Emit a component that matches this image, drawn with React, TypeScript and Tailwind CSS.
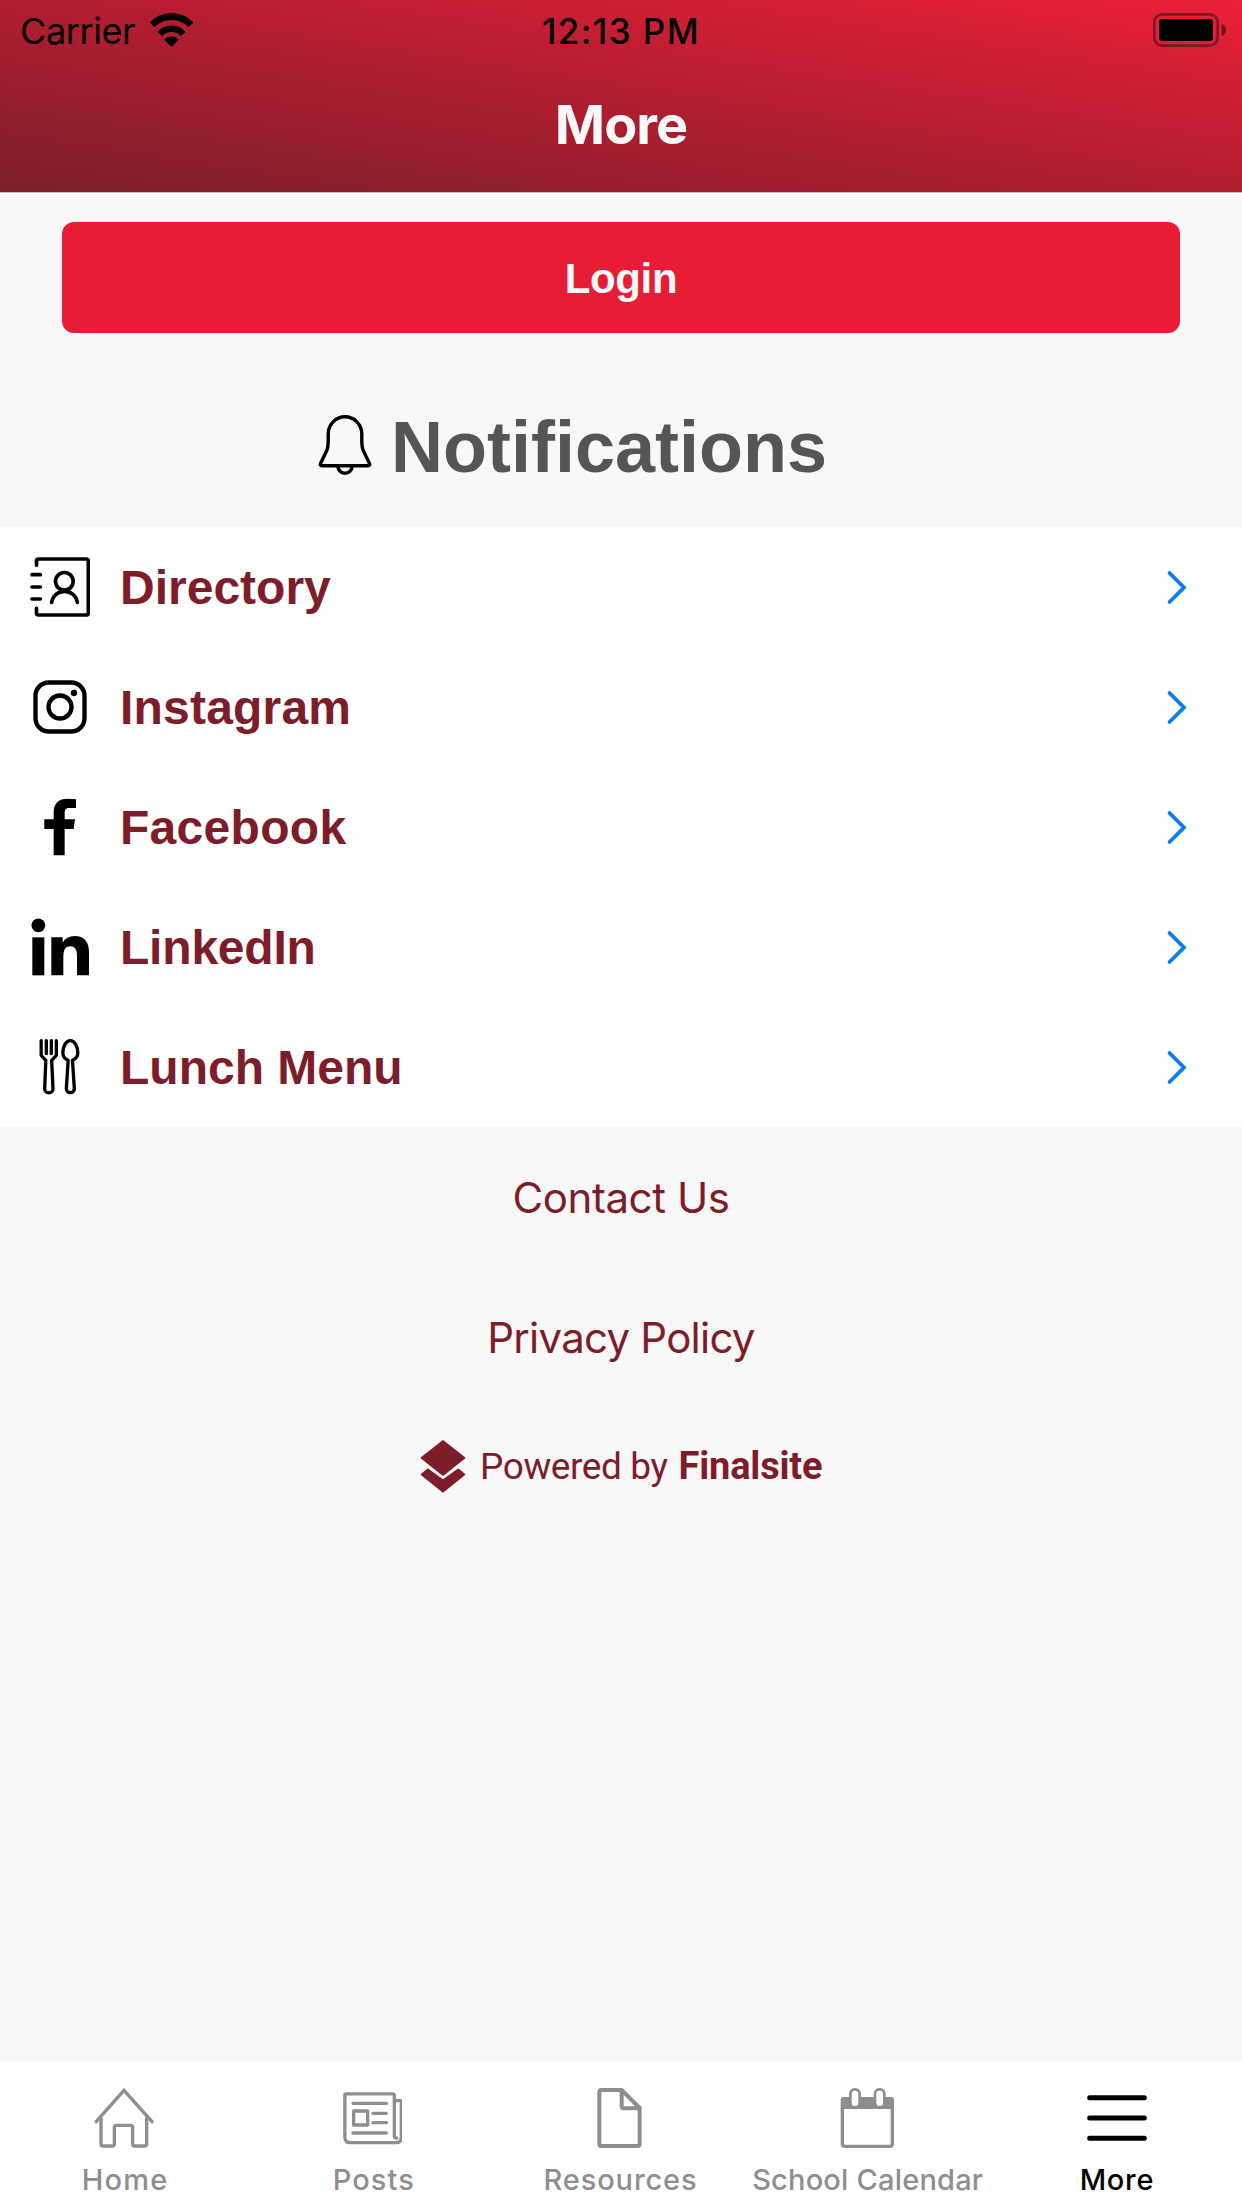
import type { ReactNode } from "react";

function WifiIcon() {
  return (
    <svg className="h-[34px] w-[45px]" viewBox="0 0 135 102" fill="none" stroke="#000">
      <path d="M8.8 35.3A83 83 0 0 1 126.2 35.3" strokeWidth="20" />
      <path d="M32.5 63A47 47 0 0 1 102.5 63" strokeWidth="19" />
      <path d="M46 80Q67.5 60 89 80L70 99q-2.5 2-5 0Z" fill="#000" stroke="none" />
    </svg>
  );
}

function BatteryIcon() {
  return (
    <svg className="h-[34px] w-[73px]" viewBox="0 0 219 102">
      <rect x="4" y="4" width="190" height="94" rx="24" fill="none" stroke="#000" strokeOpacity="0.4" strokeWidth="8" />
      <rect x="18" y="18" width="162" height="66" rx="9" />
      <path d="M206 33q13 5 13 18t-13 18Z" fillOpacity="0.5" />
    </svg>
  );
}

function BellIcon() {
  return (
    <svg className="size-[60px]" viewBox="0 0 60 60" fill="none" stroke="#000" strokeWidth="3.4" strokeLinejoin="round">
      <path d="M13.2 19A16.8 17.2 0 0 1 46.8 19V26C46.8 30 47 33 48.5 36L54.5 48.5q1 2.2-1.5 2.2H7q-2.5 0-1.5-2.2L11.5 36C13 33 13.2 30 13.2 26Z" />
      <path d="M23 51.5a7 6.8 0 0 0 14 0" />
    </svg>
  );
}

function MenuIcon({ children, strokeWidth = 11 }: { children: ReactNode; strokeWidth?: number }) {
  return (
    <svg
      className="size-[60px] shrink-0"
      viewBox="0 0 180 180"
      fill="none"
      stroke="#000"
      strokeWidth={strokeWidth}
      strokeLinecap="round"
      strokeLinejoin="round"
    >
      {children}
    </svg>
  );
}

const menu: { label: string; track: string; icon: ReactNode }[] = [
  {
    label: "Directory",
    track: "tracking-normal",
    icon: (
      <MenuIcon>
        <path d="M19.5 25V12q0-6 6-6H168q7 0 7 7V167q0 7-7 7H26q-6.5 0-6.5-6V154" />
        <path d="M6 53H31M6 90H31M6 126H31" />
        <circle cx="103" cy="73" r="26.5" />
        <path d="M65 136C68 116 84 103 103.5 103S139 116 142 136" />
      </MenuIcon>
    ),
  },
  {
    label: "Instagram",
    track: "tracking-[0.2px]",
    icon: (
      <MenuIcon strokeWidth={13}>
        <rect x="16.5" y="16.5" width="147" height="147" rx="40" />
        <circle cx="90" cy="90" r="34.5" />
        <circle cx="132" cy="48" r="9.5" fill="#000" stroke="none" />
      </MenuIcon>
    ),
  },
  {
    label: "Facebook",
    track: "tracking-[0.3px]",
    icon: (
      <MenuIcon>
        <path
          d="M71 175V96H43V67H71V46C71 18 88 5 112 5q16 0 26 1.5V33H118C107 33 104 38 104 47V67H135L131 96H104V175Z"
          fill="#000"
          stroke="none"
        />
      </MenuIcon>
    ),
  },
  {
    label: "LinkedIn",
    track: "tracking-[-0.2px]",
    icon: (
      <MenuIcon>
        <g fill="#000" stroke="none">
          <circle cx="25" cy="25" r="20.5" />
          <rect x="7" y="61" width="36" height="114" />
          <path d="M64 61H98V77Q109 57 134 57Q177 57 177 108V175H141V114Q141 88 121 88Q100 88 100 116V175H64Z" />
        </g>
      </MenuIcon>
    ),
  },
  {
    label: "Lunch Menu",
    track: "tracking-normal",
    icon: (
      <MenuIcon strokeWidth={10}>
        <path d="M33.5 11V55L47.5 70L44 155a12.5 12.5 0 0 0 25 0L65 70L79 55V11M49 11V50M64 11V50" />
        <path d="M114.5 70C103 65 98.5 58 98.5 48C98.5 30 107 11 121 11S143.5 30 143.5 48C143.5 58 139 65 127.5 70L133 155a12 12 0 0 1-24 0Z" />
      </MenuIcon>
    ),
  },
];

function MenuRow({ label, track, icon }: { label: string; track: string; icon: ReactNode }) {
  return (
    <li className="flex h-[120px] items-center pr-[54px] pl-[30px]">
      {icon}
      <span className={`ml-[30px] flex-1 pt-[2px] font-['Liberation_Sans',sans-serif] text-[48px] leading-none font-bold text-[#7e1d2a] ${track}`}>
        {label}
      </span>
      <svg className="h-9 w-6" viewBox="0 0 24 36" fill="none" stroke="#0a7bf2" strokeWidth="3.8" strokeLinecap="round">
        <path d="M5.5 4L20 18.5L5.5 33" />
      </svg>
    </li>
  );
}

function TabIcon({ children, strokeWidth, viewBox = "0 0 180 180" }: { children: ReactNode; strokeWidth: number; viewBox?: string }) {
  return (
    <svg
      className="size-[60px]"
      viewBox={viewBox}
      fill="none"
      stroke="currentColor"
      strokeWidth={strokeWidth}
      strokeLinecap="round"
      strokeLinejoin="round"
    >
      {children}
    </svg>
  );
}

const tabs: { label: string; active?: boolean; track: string; icon: ReactNode }[] = [
  {
    label: "Home",
    track: "pl-[2px] tracking-[1.2px]",
    icon: (
      <TabIcon strokeWidth={10}>
        <path d="M6.5 101L90 7L174 101" strokeLinejoin="miter" />
        <path d="M21 91V168q0 6 6 6H55q6 0 6-6V118q0-6 6-6h43q6 0 6 6V168q0 6 6 6h30q6 0 6-6V91" />
      </TabIcon>
    ),
  },
  {
    label: "Posts",
    track: "pl-[3px] tracking-[1.1px]",
    icon: (
      <TabIcon strokeWidth={10} viewBox="-3 0 180 180">
        <path d="M161 150q-7 2-7-6V22q0-4.500-4.500-4.500H10q-4.500 0-4.500 4.500V146q0 18 18 18H158q17 0 17-17V42q0-4-4-4H155" />
        <path d="M30 46H130M90 76H130M90 104H130M30 135H130" />
        <rect x="32" y="69" width="42" height="42" />
      </TabIcon>
    ),
  },
  {
    label: "Resources",
    track: "tracking-[0.9px]",
    icon: (
      <TabIcon strokeWidth={12}>
        <path d="M35 6H95L149 60V167q0 7-7 7H35q-7 0-7-7V13q0-7 7-7Z" />
        <path d="M95 8V55q0 6 6 6H147" />
      </TabIcon>
    ),
  },
  {
    label: "School Calendar",
    track: "pr-[2px] tracking-[0.2px]",
    icon: (
      <TabIcon strokeWidth={10}>
        <path d="M5 63V36q0-9 9-9H156q9 0 9 9V63Z" fill="currentColor" stroke="none" />
        <path d="M10 60V168q0 7 7 7H153q7 0 7-7V60" strokeLinecap="butt" />
        <rect x="34" y="4" width="28" height="54" rx="13" fill="#fff" strokeWidth="8" />
        <rect x="108" y="4" width="28" height="54" rx="13" fill="#fff" strokeWidth="8" />
      </TabIcon>
    ),
  },
  {
    label: "More",
    active: true,
    track: "tracking-[0.7px]",
    icon: (
      <TabIcon strokeWidth={15}>
        <path d="M8 29H172M8 90H172M8 151H172" />
      </TabIcon>
    ),
  },
];

function LinkText({ children, track }: { children: ReactNode; track: string }) {
  return (
    <a className={`flex h-[140.5px] items-center justify-center text-[42px] leading-none text-[#7e1d2a] ${track}`}>{children}</a>
  );
}

export default function App() {
  return (
    <div className="flex h-[2208px] w-[1242px] flex-col overflow-hidden bg-[#f8f8f8] font-['Inter',sans-serif]">
      <header className="flex h-[193px] flex-col border-b border-[#cdbdbf] bg-[linear-gradient(to_top_right,#7a202b,#b21d30_50%,#ec2037)]">
        <div className="grid h-[62px] grid-cols-[1fr_auto_1fr] items-center pr-4 pl-[20px]">
          <div className="flex items-center gap-[14px]">
            <span className="text-[36px] leading-none tracking-[-0.4px]">Carrier</span>
            <span className="-mt-[3px]">
              <WifiIcon />
            </span>
          </div>
          <span className="pr-1 text-[35px] leading-none font-medium tracking-[1.4px]">12:13 PM</span>
          <div className="-mt-[2px] flex justify-end">
            <BatteryIcon />
          </div>
        </div>
        <h1 className="flex flex-1 items-center justify-center pb-[5px] text-[54px] leading-none font-bold tracking-[-1px] text-[#f8f8f8]">
          More
        </h1>
      </header>

      <main className="flex flex-1 flex-col">
        <button className="mx-[62px] mt-[29px] flex h-[111px] items-center justify-center rounded-[12px] bg-[#e81d35] pt-[2px] font-['Liberation_Sans',sans-serif] text-[42px] leading-none font-bold tracking-[-0.4px] text-[#f8f8f8]">
          Login
        </button>

        <section className="flex h-[194px] items-center gap-4 pt-[34px] pl-[315px]">
          <span className="-mt-1">
            <BellIcon />
          </span>
          <h2 className="font-['Liberation_Sans',sans-serif] text-[72px] leading-none font-bold text-[#555]">Notifications</h2>
        </section>

        <ul className="bg-white">
          {menu.map((m) => (
            <MenuRow key={m.label} {...m} />
          ))}
        </ul>

        <LinkText track="pt-px tracking-[-0.4px]">Contact Us</LinkText>
        <LinkText track="tracking-[-0.75px]">Privacy Policy</LinkText>

        <div className="flex h-[116px] items-center pl-[420px] font-['Roboto',sans-serif] leading-none text-[#7e1d2a]">
          <svg className="h-[53px] w-[46px]" viewBox="0 0 137 160" fill="currentColor" stroke="currentColor" strokeWidth="4" strokeLinejoin="round">
            <path d="M68.5 2L134 54L68.5 106L3 54Z" />
            <path d="M22 88L68.5 121L115 88L134 104L68.5 157L3 104Z" />
          </svg>
          <span className="ml-[14px] text-[37px] tracking-[-0.4px]">Powered by</span>
          <span className="ml-[11px] text-[38px] font-bold tracking-[-0.2px]">Finalsite</span>
        </div>
      </main>

      <nav className="grid h-[147px] grid-cols-5 bg-white pr-px">
        {tabs.map((t) => (
          <div key={t.label} className={t.active ? "flex flex-col items-center pt-[27px] text-black" : "flex flex-col items-center pt-[27px] text-[#8e8e90]"}>
            {t.icon}
            <span className={`mt-[17px] text-[29px] leading-none font-medium whitespace-nowrap ${t.track}`}>{t.label}</span>
          </div>
        ))}
      </nav>
    </div>
  );
}
